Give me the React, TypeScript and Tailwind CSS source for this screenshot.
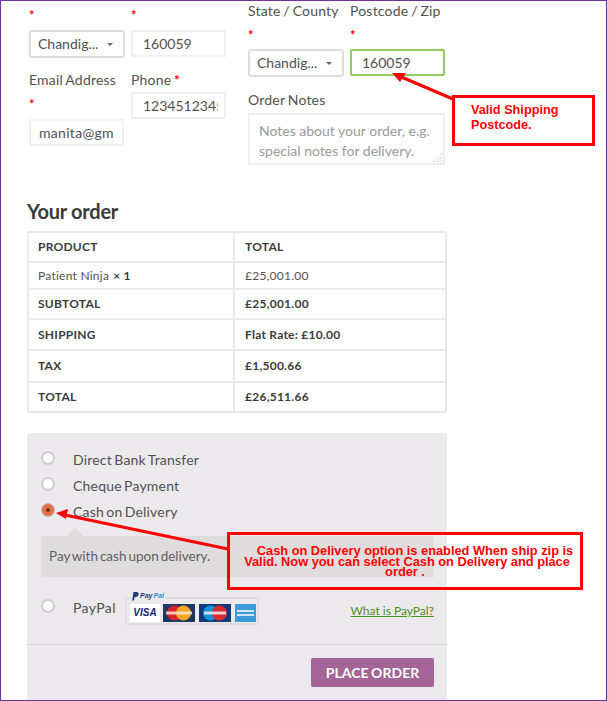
import React from "react";

const Star = ({ className = "" }: { className?: string }) => (
  <div className={`h-[24px] leading-[24px] text-[13px] font-bold text-[#f00] ${className}`}>*</div>
);

const Label = ({ children, className = "" }: { children: React.ReactNode; className?: string }) => (
  <div className={`text-[14px] leading-[24px] tracking-[0.2px] [word-spacing:-1px] text-[#515151] ${className}`}>{children}</div>
);

const Field = ({ value, className = "", clip = false, border = "border-[#efefef]", pad = "pl-[10px]" }: { value: string; className?: string; clip?: boolean; border?: string; pad?: string }) => (
  <div className={`h-[27px] w-[95px] border-2 ${border} ${pad} bg-white rounded-[2px] text-[14px] leading-[23px] text-[#515151] overflow-hidden whitespace-nowrap ${className}`}>
    <span className={clip ? "block w-[75px] overflow-hidden" : ""}>{value}</span>
  </div>
);

const Select = () => (
  <div className="h-[28px] w-[96px] border-2 border-[#dcdcdc] bg-white rounded-[3px] pl-[7px] pr-[10px] text-[14px] leading-[24px] text-[#515151] flex items-center justify-between">
    <span>Chandig...</span>
    <span className="w-0 h-0 border-x-[3px] border-x-transparent border-t-[3px] border-t-[#666]" />
  </div>
);

const rows: [string, string, boolean][] = [
  ["PRODUCT", "TOTAL", true],
  ["Patient Ninja", "£25,001.00", false],
  ["SUBTOTAL", "£25,001.00", true],
  ["SHIPPING", "Flat Rate: £10.00", true],
  ["TAX", "£1,500.66", true],
  ["TOTAL", "£26,511.66", true],
];
const heights = ["h-[28px]", "h-[27px]", "h-[30px]", "h-[31px]", "h-[32px]", "h-[30px]"];

const Radio = ({ checked = false }: { checked?: boolean }) =>
  checked ? (
    <span className="block w-[14px] h-[14px] rounded-full bg-[#e2704a] border border-[#c9c0c0] flex items-center justify-center shrink-0">
      <span className="block w-[4px] h-[4px] rounded-full bg-[#6b3322]" />
    </span>
  ) : (
    <span className="block w-[14px] h-[14px] rounded-full bg-white border-2 border-[#cfcdcf] shrink-0" />
  );

const Method = ({ label, checked }: { label: string; checked?: boolean }) => (
  <div className="h-[26px] flex text-[14px] text-[#515151]">
    <div className="w-[32px] pt-[4px]"><Radio checked={checked} /></div>
    <span className="leading-[26px] tracking-[0.2px] [word-spacing:-1.5px]">{label}</span>
  </div>
);

const PayPalCards = () => (
  <div className="relative w-[134px] h-[28px] border-2 border-[#dedcde] rounded-[3px] flex items-center gap-[3px] pl-[3px] pt-[3px]">
    <span className="absolute left-[4px] top-[-8px] bg-[#ebe9eb] px-[1px] flex items-center gap-[1px] italic font-bold text-[7px] leading-[10px] text-[#1e3a7b] font-['Liberation_Sans',sans-serif]">
      <svg width="7" height="9" viewBox="0 0 7 9"><path d="M1.5 0h3C6 0 7 1 6.6 2.6 6.2 4.2 5 5 3.6 5H2.6L2 8.5H.2z" fill="#1e3a7b" /></svg>
      Pay<span className="text-[#2a8fd0]">Pal</span>
    </span>
    <div className="w-[30px] h-[18px] bg-white flex items-center justify-center italic font-bold text-[10px] text-[#1a2a6c] font-['Liberation_Sans',sans-serif]">VISA</div>
    <svg width="32" height="18" viewBox="0 0 32 18">
      <rect width="32" height="18" fill="#1f3763" />
      <circle cx="11.5" cy="9" r="7.5" fill="#d8242c" />
      <circle cx="20.5" cy="9" r="7.5" fill="#f5a623" />
      <rect x="3" y="7.5" width="26" height="3" fill="#f4e4d4" opacity="0.85" />
    </svg>
    <svg width="32" height="18" viewBox="0 0 32 18" className="ml-[1px]">
      <rect width="32" height="18" fill="#123a7a" />
      <circle cx="11.5" cy="9" r="7.5" fill="#1495d6" />
      <circle cx="20.5" cy="9" r="7.5" fill="#dc2a30" />
      <rect x="5" y="7.5" width="22" height="3" fill="#e9eef5" opacity="0.85" />
    </svg>
    <svg width="21" height="18" viewBox="0 0 21 18" className="ml-[1px]">
      <rect width="21" height="18" fill="#3d9bd9" />
      <rect x="2" y="6" width="17" height="2" fill="#cfe6f5" />
      <rect x="2" y="10" width="17" height="2" fill="#cfe6f5" />
    </svg>
  </div>
);

export default function App() {
  return (
    <div className="relative w-[607px] h-[701px] overflow-hidden bg-white border border-[#7030a0] font-['Lato','Noto_Sans',sans-serif] text-[#515151]">
      {/* form */}
      <div className="flex h-[196px] pl-[28px]">
        <div className="w-[219px] flex gap-[7px] pt-[2px]">
          <div className="w-[95px]">
            <Star />
            <div className="mt-[3px]"><Select /></div>
            <Label className="mt-[10px] whitespace-nowrap">Email Address</Label>
            <Star />
            <Field value="manita@gm" className="mt-[3px] tracking-[0.3px]" pad="pl-[8px]" clip />
          </div>
          <div className="w-[95px]">
            <Star />
            <Field value="160059" className="mt-[3px]" />
            <Label className="mt-[11px]">Phone <span className="text-[#f00] font-bold">*</span></Label>
            <Field value="1234512345" className="mt-[0px]" clip />
          </div>
        </div>
        <div className="flex-1">
          <div className="flex gap-[7px]">
            <div className="w-[95px]">
              <Label className="whitespace-nowrap mt-[-2px]">State / County</Label>
              <Star />
              <div className="mt-[2px]"><Select /></div>
            </div>
            <div className="w-[95px]">
              <Label className="whitespace-nowrap mt-[-2px]">Postcode / Zip</Label>
              <Star />
              <Field value="160059" className="mt-[2px]" border="border-[#8fce5c]" />
            </div>
          </div>
          <Label className="mt-[11px]">Order Notes</Label>
          <div className="relative mt-[1px] w-[197px] h-[52px] border-2 border-[#efefef] bg-white pl-[9px] pt-[6px] text-[14px] leading-[20px] text-[#9a9a9a]">
            Notes about your order, e.g. special notes for delivery.
            <svg className="absolute right-0 bottom-0" width="10" height="10" viewBox="0 0 10 10">
              <path d="M9 1L1 9M9 4L4 9M9 7L7 9" stroke="#bbb" strokeWidth="1" strokeDasharray="1 1" />
            </svg>
          </div>
        </div>
      </div>

      {/* order */}
      <div className="pl-[26px] w-[446px]">
        <h2 className="h-[34px] text-[20px] leading-[28px] font-bold text-[#3a3a3a] tracking-[-0.25px]">Your order</h2>
        <div className="w-[420px] border-2 border-[#e9e9e9] rounded-[3px] text-[12px] text-[#3c3c3c]">
          {rows.map(([a, b, bold], i) => (
            <div key={i} className={`flex items-center ${heights[i]} ${i ? "border-t-2 border-[#e9e9e9]" : ""}`}>
              <div className={`w-[206px] h-full flex items-center pl-[9px] tracking-[0.25px] border-r-2 border-[#e9e9e9] ${bold ? "font-bold" : "text-[#515151]"}`}>
                {a}
                {i === 1 && <b className="ml-[4px] text-[#3c3c3c]">× 1</b>}
              </div>
              <div className={`pl-[10px] tracking-[0.25px] ${bold ? "font-bold" : "text-[#515151]"}`}>{b}</div>
            </div>
          ))}
        </div>

        {/* payment */}
        <div className="mt-[20px] w-[420px] h-[290px] bg-[#ebe9eb] rounded-[3px]">
          <div className="pl-[14px] pr-[13px] pt-[14px]">
            <Method label="Direct Bank Transfer" />
            <Method label="Cheque Payment" />
            <Method label="Cash on Delivery" checked />
            <div className="relative mt-[11px] w-[393px] h-[41px] bg-[#dfdcde] rounded-[2px] pl-[8px] text-[13.5px] leading-[40px] text-[#5f5f5f] [word-spacing:-1.5px]">
              <span className="absolute left-[26px] top-[-8px] w-0 h-0 border-x-[8px] border-x-transparent border-b-[8px] border-b-[#dfdcde]" />
              Pay with cash upon delivery.
            </div>
            <div className="mt-[20px] flex items-center h-[28px]">
              <div className="w-[32px] pb-[10px]"><Radio /></div>
              <span className="w-[52px] text-[14px] tracking-[0.4px] pb-[8px]">PayPal</span>
              <PayPalCards />
              <a className="ml-auto text-[12px] text-[#4d8f1c] underline">What is PayPal?</a>
            </div>
          </div>
          <div className="mt-[19px] border-t border-[#d8d6d8] pt-[13px] pr-[13px] flex justify-end">
            <div className="w-[123px] h-[29px] bg-[#a46497] rounded-[2px] text-white font-bold text-[14px] leading-[30px] text-center tracking-[0.05px] [word-spacing:-1px]">PLACE ORDER</div>
          </div>
        </div>
      </div>

      {/* annotations */}
      <div className="absolute left-[451px] top-[94px] w-[143px] h-[51px] border-[3px] border-[#f00] bg-white pl-[16px] pt-[5px] text-[12.7px] leading-[14.5px] font-bold text-[#f00] font-['Liberation_Sans',sans-serif]">
        Valid Shipping<br />Postcode.
      </div>
      <div className="absolute left-[226px] top-[531px] w-[356px] h-[58px] border-[3px] border-[#f00] pt-[11px] text-center text-[12.8px] leading-[10.5px] font-bold text-[#f00] font-['Liberation_Sans',sans-serif]">
        <div className="pl-[20px]">Cash on Delivery option is enabled When ship zip is</div>
        <div className="pl-[4px]">Valid. Now you can select Cash on Delivery and place</div>
        <div>order .</div>
      </div>
      <svg className="absolute left-0 top-0 pointer-events-none" width="607" height="701" viewBox="0 0 607 701">
        <line x1="452" y1="98" x2="398" y2="75" stroke="#f00" strokeWidth="3" />
        <polygon points="391,72 405,72 399,81" fill="#f00" />
        <line x1="227" y1="548" x2="64" y2="514" stroke="#f00" strokeWidth="3" />
        <polygon points="55,512 67,508 65,518" fill="#f00" />
      </svg>
    </div>
  );
}
